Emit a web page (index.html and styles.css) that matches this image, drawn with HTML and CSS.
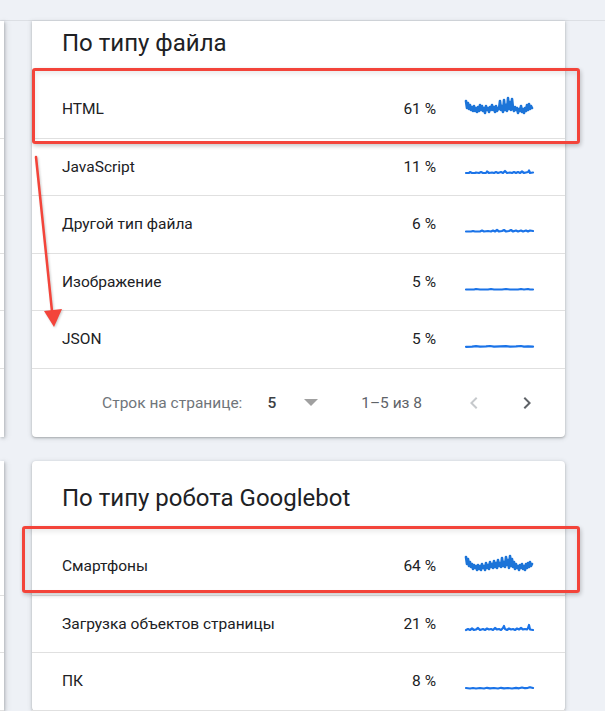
FILE: index.html
```html
<!DOCTYPE html>
<html lang="ru">
<head>
<meta charset="utf-8">
<title>Отчет</title>
<link rel="stylesheet" href="styles.css">
</head>
<body>
<div class="topbar"></div>
<div class="content">
  <div class="side">
    <div class="side-card side-card--first">
      <div class="side-title"></div>
      <div class="side-row"></div><div class="side-row"></div><div class="side-row"></div><div class="side-row"></div><div class="side-row"></div>
    </div>
    <div class="side-card">
      <div class="side-title side-title--second"></div>
      <div class="side-row"></div><div class="side-row"></div><div class="side-row"></div>
    </div>
  </div>

  <div class="main">
    <section class="card card--first">
      <h2 class="card-title card-title--first">По типу файла</h2>
      <div class="row">
        <span class="label">HTML</span><span class="pct">61 %</span>
        <svg class="spark spark--big" viewBox="0 0 67 24"><polyline points="0,4 1,11 2,6 3,12 4,8 5,13 6,10 7,14 8,9 9,14 10,11 11,15 12,10 13,14 14,8 15,13 16,9 17,14 18,11 19,16 20,9 21,13 22,11 23,15 24,10 25,13 26,8 27,13 28,10 29,15 30,9 31,14 32,11 33,12 34,4 35,13 36,9 37,15 38,3 39,13 40,8 41,14 42,1 43,12 44,5 45,13 46,2 47,11 48,14 49,10 50,13 51,11 52,16 53,12 54,14 55,9 56,15 57,12 58,16 59,11 60,14 61,8 62,13 63,7 64,12 65,9 66,11"/></svg>
      </div>
      <div class="row">
        <span class="label">JavaScript</span><span class="pct">11 %</span>
        <svg class="spark" viewBox="0 0 67 24"><polyline points="0,18 3,18 4,17 6,18 9,18 10,17.5 13,18 15,17 17,18 20,18 21,16.5 23,18 26,17.5 28,18 30,17 32,18 35,17 37,18 39,16 41,18 44,17.5 46,18 48,17 50,18 52,17 54,18 56,16.5 58,18 60,17.5 62,17 63,15.5 64,18 67,17.5"/></svg>
      </div>
      <div class="row">
        <span class="label">Другой тип файла</span><span class="pct">6 %</span>
        <svg class="spark" viewBox="0 0 67 24"><polyline points="0,19.5 5,19.5 7,19 9,19.5 14,19.5 16,18.5 18,19.5 22,19 25,19.5 27,18.5 29,19.5 31,18 33,19.5 36,19 38,18 40,19.5 43,19 45,18 47,19.5 50,18.5 52,19.5 55,18.5 57,19.5 60,18.5 62,19.5 64,18.5 67,19"/></svg>
      </div>
      <div class="row">
        <span class="label">Изображение</span><span class="pct">5 %</span>
        <svg class="spark" viewBox="0 0 67 24"><polyline points="0,19.5 8,19.5 10,19 14,19.5 22,19.5 25,19 28,19.5 36,19.5 40,19 44,19.5 52,19.5 55,19 58,19.5 62,19 64,19.5 67,19.5"/></svg>
      </div>
      <div class="row">
        <span class="label">JSON</span><span class="pct">5 %</span>
        <svg class="spark" viewBox="0 0 67 24"><polyline points="0,19.8 6,19.6 10,19.2 14,19.6 20,19.4 24,19 28,19.6 34,19.4 40,19.2 44,19.6 50,19.4 55,19 58,19.6 62,19.4 67,19.6"/></svg>
      </div>
      <div class="pager">
        <span class="pager-label">Строк на странице:</span>
        <span class="pager-size">5</span>
        <svg class="pager-drop" viewBox="0 0 14 8"><polygon points="0,0 14,0 7,7"/></svg>
        <span class="pager-range">1–5 из 8</span>
        <svg class="pager-icon pager-icon--off" viewBox="0 0 24 24"><path d="M15.41 7.41L14 6l-6 6 6 6 1.41-1.41L10.83 12z"/></svg>
        <svg class="pager-icon" viewBox="0 0 24 24"><path d="M10 6L8.59 7.41 13.17 12l-4.58 4.59L10 18l6-6z"/></svg>
      </div>
    </section>

    <section class="card">
      <h2 class="card-title card-title--second">По типу робота Googlebot</h2>
      <div class="row">
        <span class="label">Смартфоны</span><span class="pct">64 %</span>
        <svg class="spark spark--big" viewBox="0 0 67 24"><polyline points="0,3 1,10 2,5 3,12 4,8 5,13 6,10 7,15 8,11 9,14 10,12 11,16 12,11 13,15 14,12 15,16 16,10 17,14 18,12 19,16 20,9 21,14 22,11 23,15 24,8 25,13 26,10 27,14 28,7 29,13 30,9 31,14 32,6 33,12 34,9 35,13 36,4 37,12 38,8 39,13 40,3 41,11 42,6 43,14 44,2 45,12 46,5 47,13 48,8 49,15 50,10 51,14 52,12 53,16 54,11 55,14 56,10 57,15 58,12 59,16 60,10 61,14 62,9 63,13 64,8 65,12 66,10"/></svg>
      </div>
      <div class="row">
        <span class="label">Загрузка объектов страницы</span><span class="pct">21 %</span>
        <svg class="spark" viewBox="0 0 67 24"><polyline points="0,18 2,17 4,18 6,16.5 8,18 10,17.5 12,16 14,18 17,17 19,18 21,16.5 23,17.5 25,17 27,18 29,16 31,17.5 33,17 35,18 37,16 38,14 39,17 41,18 43,16.5 45,17.5 47,17 49,18 51,16.5 53,17.5 55,16 57,17.5 59,17 61,17.5 62,16 63,13 64,17.5 67,18"/></svg>
      </div>
      <div class="row">
        <span class="label">ПК</span><span class="pct">8 %</span>
        <svg class="spark" viewBox="0 0 67 24"><polyline points="0,19 4,19.5 7,19 10,19.5 14,19 18,19.5 21,18.8 24,19.3 28,19 32,19.5 35,18.8 38,19.3 42,19 46,19.5 50,18.8 53,19.3 56,18.5 59,19.2 62,18.8 64,18.2 67,19"/></svg>
      </div>
    </section>
  </div>
</div>

<div class="annotations">
  <div class="mark mark--one"></div>
  <div class="mark mark--two"></div>
  <svg class="arrow" viewBox="0 0 605 711">
    <line x1="36" y1="157" x2="52.5" y2="316"/>
    <polygon points="44,311 62,309 54,327"/>
  </svg>
</div>
</body>
</html>
```

FILE: styles.css
```css
* { box-sizing: border-box; }

html, body {
  margin: 0;
  padding: 0;
}

body {
  width: 605px;
  height: 711px;
  overflow: hidden;
  position: relative;
  background: #eef1f6;
  font-family: Roboto, "Noto Sans", Arial, sans-serif;
  color: #202124;
}

.topbar {
  height: 21px;
  border-bottom: 1px solid #dcdfe4;
  background: #eef1f6;
}

.content {
  display: flex;
  align-items: flex-start;
  gap: 28px;
}

.side {
  width: 4px;
  display: flex;
  flex-direction: column;
  gap: 24px;
}

.side-card {
  background: #fff;
  box-shadow: 1px 1px 3px rgba(60, 64, 67, 0.3), 2px 1px 6px rgba(60, 64, 67, 0.12);
}

.side-card--first {
  height: 416px;
}

.side-title { height: 60px; }
.side-title--second { height: 77px; }

.side-row {
  height: 57.5px;
  border-bottom: 1px solid #e0e0e0;
}

.main {
  width: 533px;
  display: flex;
  flex-direction: column;
  gap: 24px;
}

.card {
  background: #fff;
  border-radius: 4px;
  box-shadow: 0 1px 2px rgba(60, 64, 67, 0.3), 0 1px 4px 1px rgba(60, 64, 67, 0.15);
}

.card--first {
  border-radius: 0 0 4px 4px;
  height: 416px;
}

.card-title {
  margin: 0;
  padding: 8px 30px 24px;
  font-size: 24px;
  line-height: 28px;
  font-weight: 400;
  color: #202124;
}

.card-title--second {
  padding-top: 23px;
  padding-bottom: 26px;
}

.row {
  height: 57.5px;
  display: flex;
  align-items: center;
  padding: 0 32px 0 30px;
  border-bottom: 1px solid #e0e0e0;
  font-size: 15.5px;
}

.label {
  flex: 1;
  color: #202124;
}

.pct {
  color: #202124;
  text-align: right;
}

.spark {
  width: 67px;
  height: 24px;
  margin-left: 30px;
  flex: none;
  overflow: visible;
}

.spark polyline {
  fill: none;
  stroke: #1a73e8;
  stroke-width: 2.2;
  stroke-linejoin: round;
  stroke-linecap: round;
}

.spark--big polyline {
  stroke: #1c74d8;
  stroke-width: 2.6;
}

.pager {
  height: 68.5px;
  display: flex;
  align-items: center;
  justify-content: flex-end;
  padding-right: 26px;
  font-size: 15.5px;
  color: #5f6368;
}

.pager-label {
  color: #70757a;
}

.pager-size {
  margin-left: 25px;
  color: #3c4043;
  font-weight: 500;
}

.pager-drop {
  width: 14px;
  height: 8px;
  margin-left: 28px;
  fill: #a0a0a0;
}

.pager-range {
  margin-left: 43px;
  color: #5f6368;
}

.pager-icon {
  width: 24px;
  height: 24px;
  fill: #5f6368;
  margin-left: 29px;
}

.pager-icon--off {
  fill: #c6c9cc;
  margin-left: 40px;
}

.annotations {
  position: absolute;
  left: 0;
  top: 0;
  width: 605px;
  height: 711px;
  pointer-events: none;
}

.mark {
  position: absolute;
  border: 3px solid #f3443a;
  border-radius: 3px;
  box-shadow: 1px 2px 4px rgba(0, 0, 0, 0.22), inset 1px 3px 5px rgba(0, 0, 0, 0.08);
}

.mark--one {
  left: 32px;
  top: 68px;
  width: 548px;
  height: 76px;
}

.mark--two {
  left: 22px;
  top: 526px;
  width: 558px;
  height: 67px;
}

.arrow {
  position: absolute;
  left: 0;
  top: 0;
  width: 605px;
  height: 711px;
  filter: drop-shadow(1px 1px 1px rgba(0, 0, 0, 0.2));
}

.arrow line {
  stroke: #f3443a;
  stroke-width: 2.5;
  stroke-linecap: round;
}

.arrow polygon {
  fill: #f3443a;
}
```
